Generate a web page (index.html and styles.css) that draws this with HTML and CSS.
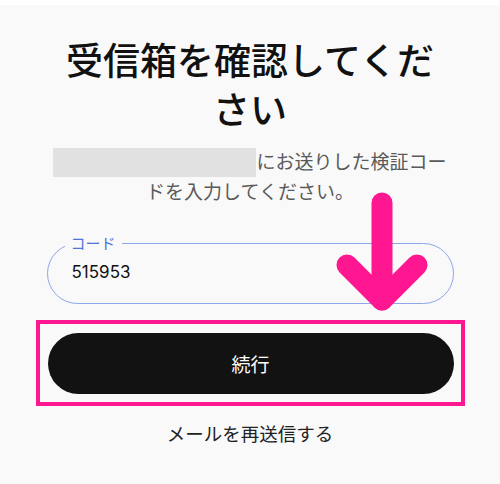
FILE: index.html
```html
<!DOCTYPE html>
<html lang="ja">
<head>
<meta charset="utf-8">
<link rel="stylesheet" href="styles.css">
</head>
<body>
<main class="page">
  <h1 class="title">受信箱を確認してください</h1>
  <p class="sub"><span class="redact"></span>にお送りした検証コードを入力してください。</p>
  <fieldset class="field">
    <legend class="field-label">コード</legend>
    <input class="field-input" type="text" value="515953" readonly>
  </fieldset>
  <div class="highlight">
    <button class="btn" type="button">続行</button>
  </div>
  <a class="resend">メールを再送信する</a>
  <svg class="arrow" width="110" height="135" viewBox="0 0 110 135" aria-hidden="true">
    <g fill="none" stroke="#fe1791" stroke-width="21" stroke-linecap="round" stroke-linejoin="round">
      <path d="M52 18 V115"/>
      <path d="M17 80 L52 115 L87 80"/>
    </g>
  </svg>
</main>
</body>
</html>
```

FILE: styles.css
```css
* { box-sizing: border-box; }
html, body { margin: 0; padding: 0; }
body {
  background: #f9f9f9;
  font-family: "Noto Sans CJK JP", "Noto Sans", sans-serif;
  color: #111;
}
.page {
  position: relative;
  height: 484px;
  border-top: 5px solid #ffffff;
  padding-top: 30px;
  display: flex;
  flex-direction: column;
  align-items: center;
}
.title {
  width: 384px;
  margin: 0;
  font-size: 37px;
  line-height: 49px;
  font-weight: 500;
  text-align: center;
  color: #111;
}
.sub {
  width: 400px;
  margin: 14px 0 0;
  font-size: 19px;
  line-height: 28px;
  text-align: center;
  color: #5a5a5a;
}
.redact {
  display: inline-block;
  width: 203px;
  height: 29px;
  background: #e1e1e1;
  vertical-align: -8px;
}
.field {
  width: 407px;
  margin: 30px 0 0;
  padding: 0 24px;
  border: 1px solid #8ea6ea;
  border-radius: 31px;
  min-inline-size: 0;
}
.field-label {
  margin-left: -7px;
  padding: 0 6px;
  font-size: 15px;
  line-height: 16px;
  color: #4d74db;
}
.field-input {
  display: block;
  width: 100%;
  margin: 0;
  padding: 9px 0 19px;
  border: none;
  outline: none;
  background: transparent;
  font-family: "Inter", "Liberation Sans", sans-serif;
  font-size: 17px;
  line-height: 24px;
  color: #111;
}
.highlight {
  width: 429px;
  margin-top: 16px;
  padding: 9px 7px 8px 8px;
  border: 4px solid #fe1791;
}
.btn {
  display: block;
  width: 406px;
  height: 61px;
  border: none;
  border-radius: 31px;
  background: #121212;
  color: #fff;
  font-family: "Noto Sans CJK JP", sans-serif;
  font-size: 19px;
}
.resend {
  margin-top: 14px;
  font-size: 18.5px;
  line-height: 26px;
  color: #222;
}
.arrow {
  position: absolute;
  left: 330px;
  top: 180px;
}
```
